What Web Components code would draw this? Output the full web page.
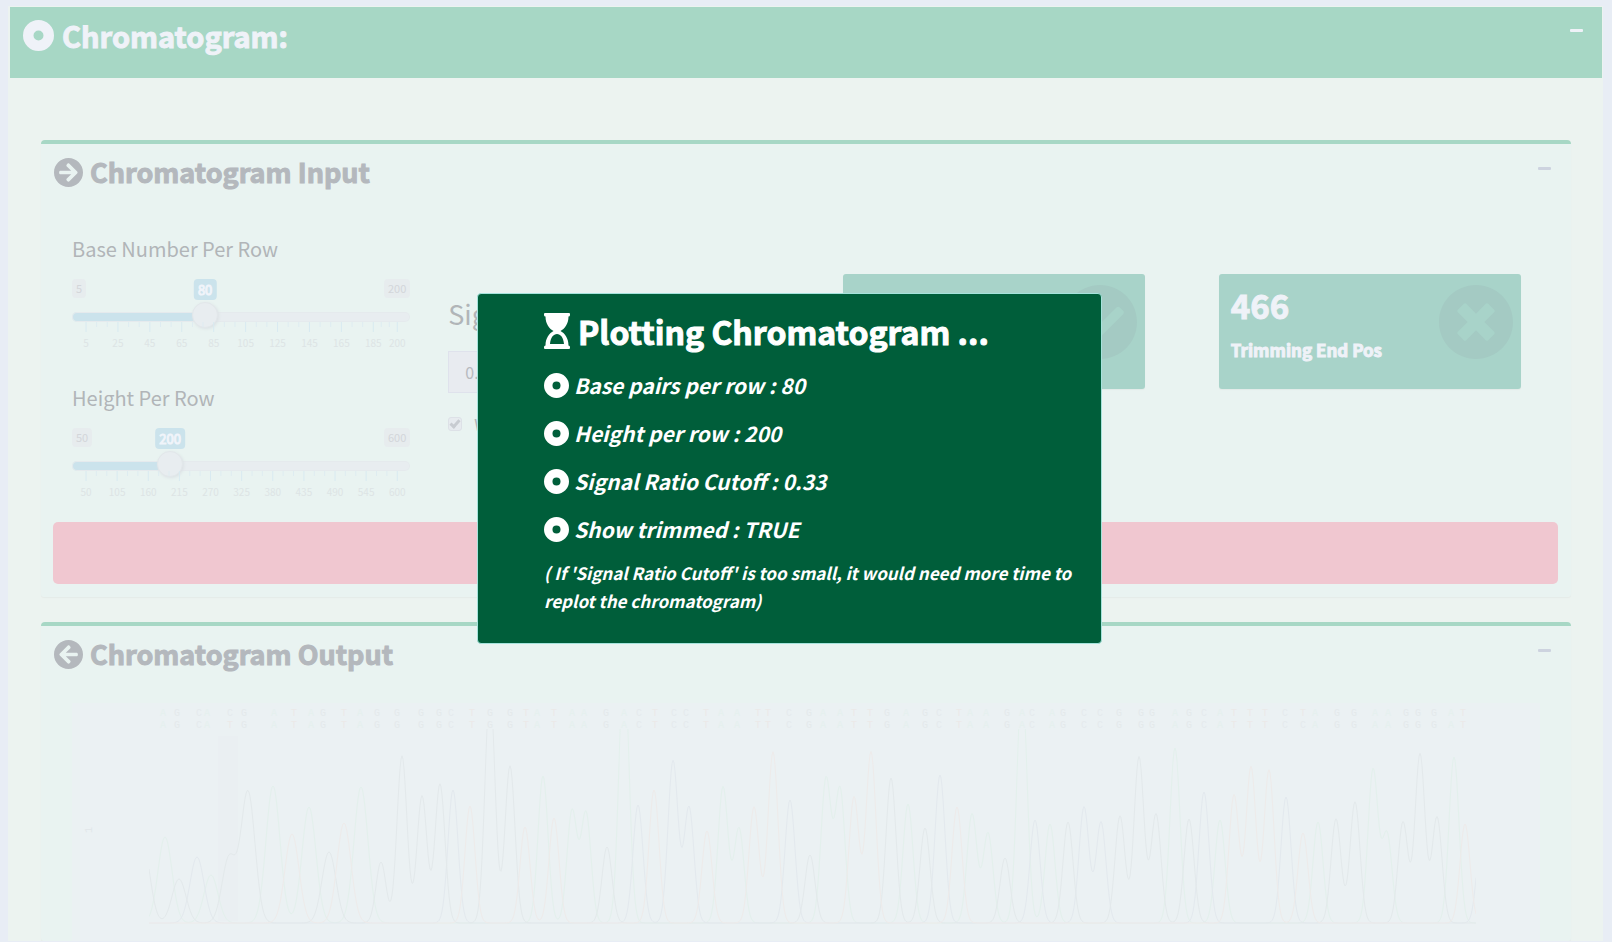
<!DOCTYPE html>
<html lang="en">
<head>
<meta charset="utf-8">
<title>Chromatogram</title>
<style>
  html { background: #e8edf5; }
  body { margin: 0; font-family: "Noto Sans CJK SC", "Open Sans", sans-serif; color: #b1b5b8; }
</style>
</head>
<body>
<chroma-page>
  <chroma-panel heading="Chromatogram Input" icon="right">
    <input-grid>
      <div slot="sliders">
        <range-slider label="Base Number Per Row" min="5" max="200" value="80" step="20"></range-slider>
        <range-slider label="Height Per Row" min="50" max="600" value="200" step="55"></range-slider>
      </div>
      <cutoff-form slot="form"></cutoff-form>
      <value-box slot="start" icon="check"></value-box>
      <value-box slot="end" value="466" caption="Trimming End Pos" icon="times"></value-box>
    </input-grid>
  </chroma-panel>
  <chroma-panel heading="Chromatogram Output" icon="left">
    <chroma-plot></chroma-plot>
  </chroma-panel>
</chroma-page>
<plot-notice>
  <span slot="title">Plotting Chromatogram ...</span>
  <notice-item>Base pairs per row : 80</notice-item>
  <notice-item>Height per row : 200</notice-item>
  <notice-item>Signal Ratio Cutoff : 0.33</notice-item>
  <notice-item>Show trimmed : TRUE</notice-item>
  <span slot="note">( If 'Signal Ratio Cutoff' is too small, it would need more time to replot the chromatogram)</span>
</plot-notice>

<script>
const ICONS = {
  dot: '<path fill-rule="evenodd" d="M256 8a248 248 0 1 0 0 496a248 248 0 1 0 0-496zM256 176a80 80 0 1 1 0 160a80 80 0 1 1 0-160z"/>',
  right: '<path d="M256 8c137 0 248 111 248 248S393 504 256 504 8 393 8 256 119 8 256 8zm-28.900 143.600l75.500 72.400H120c-13.300 0-24 10.700-24 24v16c0 13.300 10.700 24 24 24h182.600l-75.500 72.400c-9.700 9.300-9.900 24.800-.4 34.300l11 10.900c9.400 9.400 24.600 9.400 33.900 0L404.300 273c9.400-9.400 9.400-24.600 0-33.900L271.600 106.300c-9.400-9.400-24.600-9.400-33.900 0l-11 10.900c-9.500 9.600-9.300 25.100.4 34.400z"/>',
  left: '<path transform="matrix(-1 0 0 1 512 0)" d="M256 8c137 0 248 111 248 248S393 504 256 504 8 393 8 256 119 8 256 8zm-28.900 143.600l75.500 72.400H120c-13.300 0-24 10.700-24 24v16c0 13.300 10.700 24 24 24h182.600l-75.500 72.400c-9.700 9.300-9.900 24.800-.4 34.300l11 10.900c9.400 9.400 24.600 9.400 33.900 0L404.300 273c9.400-9.400 9.400-24.600 0-33.900L271.600 106.300c-9.400-9.400-24.600-9.400-33.900 0l-11 10.900c-9.500 9.600-9.300 25.100.4 34.400z"/>',
  check: '<path d="M504 256c0 136.967-111.033 248-248 248S8 392.967 8 256 119.033 8 256 8s248 111.033 248 248zM227.314 387.314l184-184c6.248-6.248 6.248-16.379 0-22.627l-22.627-22.627c-6.248-6.249-16.379-6.249-22.628 0L216 308.118l-70.059-70.059c-6.248-6.248-16.379-6.248-22.628 0l-22.627 22.627c-6.248 6.248-6.248 16.379 0 22.627l104 104c6.249 6.249 16.379 6.249 22.628.001z"/>',
  times: '<path d="M256 8C119 8 8 119 8 256s111 248 248 248 248-111 248-248S393 8 256 8zm121.600 313.100c4.700 4.700 4.700 12.300 0 17L338 377.600c-4.700 4.700-12.300 4.700-17 0L256 312l-65.100 65.600c-4.700 4.700-12.300 4.700-17 0L134.400 338c-4.700-4.700-4.700-12.300 0-17l65.600-65-65.600-65.100c-4.700-4.700-4.700-12.300 0-17l39.600-39.600c4.700-4.700 12.300-4.700 17 0l65 65.700 65.100-65.600c4.700-4.700 12.300-4.700 17 0l39.600 39.600c4.700 4.700 4.700 12.300 0 17L312 256l65.600 65.100z"/>'
};
const icon = name => `<svg class="icon" viewBox="8 8 496 496" aria-hidden="true">${ICONS[name]}</svg>`;

function define(name, render) {
  customElements.define(name, class extends HTMLElement {
    connectedCallback() {
      if (this.shadowRoot) return;
      this.attachShadow({ mode: 'open' }).innerHTML = render(this);
    }
  });
}

define('chroma-page', () => `
<style>
  :host { display: block; padding: 6px 9px 0 8px; }
  main { border: solid #ecf3f0; border-width: 1px 1px 0 2px; background: #ecf3f0; }
  header { display: flex; justify-content: space-between; align-items: flex-start; height: 71px; box-sizing: border-box;
    padding: 10px 19px 0 13px; background: #a7d7c5; color: #eff2f8; }
  h1 { display: flex; align-items: center; gap: 8px; margin: 0; font-size: 29px; line-height: 36px; font-weight: 700; -webkit-text-stroke: 1px currentColor; }
  .icon { width: 31px; height: 31px; fill: currentColor; }
  button { border: 0; padding: 0; width: 13px; height: 27px; background: none; color: inherit; }
  button::before { content: ""; display: block; height: 3px; border-radius: 1px; background: currentColor; }
  .body { display: grid; gap: 25px; padding: 62px 31px 0; }
</style>
<main>
  <header><h1>${icon('dot')}<span>Chromatogram:</span></h1><button aria-label="Collapse"></button></header>
  <div class="body"><slot></slot></div>
</main>`);

define('chroma-panel', el => `
<style>
  :host { display: block; min-width: 0; background: #e9f3f1; border-top: 4px solid #a7d7c5; border-radius: 4px 4px 3px 3px;
    box-shadow: 0 1px 1px #e5ebe8; }
  header { display: flex; justify-content: space-between; align-items: flex-start; padding: 10px 20px 0 13px; }
  h2 { display: flex; align-items: center; gap: 7px; margin: 0; font-size: 27px; line-height: 36px; font-weight: 700; color: #b4b8bd; -webkit-text-stroke: 1px currentColor; }
  .icon { width: 29px; height: 29px; fill: currentColor; }
  button { border: 0; padding: 0; width: 13px; height: 29px; background: none; color: #cdd3df; }
  button::before { content: ""; display: block; height: 3px; border-radius: 1px; background: currentColor; }
</style>
<header><h2>${icon(el.getAttribute('icon'))}<span>${el.getAttribute('heading')}</span></h2><button aria-label="Collapse"></button></header>
<slot></slot>`);

define('input-grid', () => `
<style>
  :host { display: block; padding: 45px 13px 13px 12px; }
  .row { display: grid; grid-template-columns: repeat(4, minmax(0, 1fr)); align-items: start; }
  .col { padding: 0 19px; }
  .form { padding-top: 61px; }
  .box { padding: 39px 37px 0; }
  button { display: block; width: 100%; height: 62px; margin-top: 21px; border: 0; border-radius: 5px; background: #f0c7d0; }
  ::slotted([slot=sliders]) { display: grid; gap: 32px; }
</style>
<div class="row">
  <div class="col"><slot name="sliders"></slot></div>
  <div class="col form"><slot name="form"></slot></div>
  <div class="box"><slot name="start"></slot></div>
  <div class="box"><slot name="end"></slot></div>
</div>
<button aria-label="Save parameters"></button>`);

define('range-slider', el => {
  const [min, max, value, step] = ['min', 'max', 'value', 'step'].map(k => +el.getAttribute(k));
  const at = v => (v - min) / (max - min) * 100;
  const majors = [];
  for (let v = min; v <= max; v += step) majors.push(v);
  if (majors[majors.length - 1] !== max) majors.push(max);
  let scale = '';
  majors.forEach((v, i) => {
    scale += `<line class="major" x1="${at(v)}%" x2="${at(v)}%" y2="10"/><text x="${at(v)}%" y="25">${v}</text>`;
    if (i + 1 < majors.length) for (const f of [1 / 3, 2 / 3]) {
      const x = at(v + (majors[i + 1] - v) * f);
      scale += `<line x1="${x}%" x2="${x}%" y2="5"/>`;
    }
  });
  const p = at(value) / 100;
  return `
<style>
  :host { display: block; --fill: calc(13px + (100% - 26px) * ${p}); }
  label { display: block; font-size: 20px; line-height: 28px; margin-bottom: 16px; }
  .marks { position: relative; display: flex; justify-content: space-between; align-items: flex-start; height: 33px;
    font-size: 11px; line-height: 19px; color: #d3d6da; }
  .marks span { padding: 0 4px; border-radius: 4px; background: #e7ecee; }
  output { position: absolute; left: var(--fill); transform: translateX(-50%); padding: 0 4px; border-radius: 4px;
    font-size: 13px; line-height: 21px; background: #cbe3ec; color: #f0f4fa; -webkit-text-stroke: 1px currentColor; }
  input { display: block; appearance: none; width: 100%; height: 10px; margin: 0; border-radius: 5px; outline-offset: 4px;
    background: linear-gradient(#cbe3ec, #cbe3ec) 0 0 / var(--fill) 100% no-repeat, #e8edf0;
    box-shadow: inset 0 0 0 1px #e5eaed; }
  input::-webkit-slider-runnable-track { height: 10px; }
  input::-webkit-slider-thumb { appearance: none; width: 26px; height: 26px; margin-top: -10px; border-radius: 50%;
    background: #e8edf0; border: 1px solid #e2e7ea; box-shadow: 1px 1px 3px #dce2e5; }
  .scale { padding: 0 13px 0 14px; }
  svg { display: block; width: 100%; height: 30px; overflow: visible; }
  line { stroke: #deecf1; stroke-width: 1; }
  .major { stroke: #d8eaf1; }
  text { font-size: 10px; text-anchor: middle; fill: #dde4e5; }
</style>
<label for="range">${el.getAttribute('label')}</label>
<div class="marks"><span>${min}</span><output for="range">${value}</output><span>${max}</span></div>
<input id="range" type="range" min="${min}" max="${max}" value="${value}">
<div class="scale"><svg>${scale}</svg></div>`;
});

define('cutoff-form', () => `
<style>
  :host { display: block; }
  label { display: block; }
  .title { font-size: 27px; line-height: 36px; margin-bottom: 19px; }
  input[type=text] { display: block; width: 100%; height: 42px; box-sizing: border-box; padding: 0 16px; border: 1px solid #dfe2ec;
    background: #e8ebf0; font: 16px/40px "Noto Sans CJK SC", sans-serif; color: #b7babf; }
  .check { display: flex; align-items: center; gap: 12px; margin-top: 19px; font-size: 16px; line-height: 24px; }
  input[type=checkbox] { appearance: none; display: grid; place-items: center; width: 14px; height: 14px; margin: 0;
    border: 1px solid #dde1e7; border-radius: 3px; background: #e7ebef; }
  input[type=checkbox]:checked::before { content: ""; width: 3px; height: 7px; margin-bottom: 2px; border: solid #c8ccd1; border-width: 0 3px 3px 0; transform: rotate(42deg); }
</style>
<label class="title" for="cutoff">Signal Ratio Cutoff</label>
<input id="cutoff" type="text" value="0.33">
<label class="check"><input type="checkbox" checked>Whether show trimmed region</label>`);

define('value-box', el => `
<style>
  :host { display: block; }
  article { display: flex; justify-content: space-between; height: 115px; box-sizing: border-box; padding: 11px 8px 0 12px;
    border-radius: 3px; background: #a8d3c9; color: #eff2f8; font-weight: 700; box-shadow: 0 1px 1px #e2eae8; -webkit-text-stroke: 1px currentColor; }
  .value { font-size: 33px; line-height: 40px; }
  .caption { font-size: 17px; line-height: 24px; margin-top: 13px; white-space: nowrap; }
  .icon { width: 74px; height: 74px; fill: #a4cac3; flex: none; stroke: none; }
</style>
<article><div><div class="value">${el.getAttribute('value') || ''}</div><div class="caption">${el.getAttribute('caption') || ''}</div></div>${icon(el.getAttribute('icon'))}</article>`);

/* Each base call: letter position, primary call, secondary call. */
const CALLS = `163AA 177GG 199CC 207AA 230CT 244GG 274AA 294TT 311AA 323GG 344TT 360AA 377GG 397GG 421GG 439GG 451CC 472TT 490GG 510GG 526TT 537AA
554TT 572AA 584AA 606GG 624AA 639CC 655TT 674CC 686CC 706TT 721AA 737AA 758TT 768TT 789CC 809GG 823AA 840AA 854TT 870TT 887GG 906AA 925GG 939CC 959TT 970AA 986AA 1007GG 1022AA 1032CC 1052AA 1063GG
1084CC 1100CC 1119GG 1141GG 1152GG 1175AA 1189GG 1204CC 1220AA 1234TT 1250TT 1265TT 1285CC 1303TC 1315AA 1337GG 1354GG 1375AA 1388AA 1406GG 1418GG 1434GG 1451AA 1463TT`.trim().split(/\s+/);
/* Trace peaks: channel, centre and apex in plot coordinates. */
const PEAKS = `G143,845 A165,837 G179,879 C197,857 A211,875 G229,858 G248,792 A273,786 T292,834 A309,807 G329,852 T344,823 A361,787 G381,862 G402,756 G422,796 G440,784 C453,790 T470,806 G490,690 G510,766 T525,827 A543,776
T554,818 A572,811 A586,813 G607,847 A624,660 C638,805 T654,790 C673,761 C689,807 T707,831 A723,787 A739,828 T754,807 T773,752 C790,800 G810,855 A826,779 A840,789 T854,797 T871,752 G891,778 A908,804 G925,828 C940,775 T957,807 A972,814 A988,833 G1005,858 A1022,680 C1035,820 A1050,824 G1068,822
C1084,807 C1101,822 G1120,816 G1139,757 G1156,814 A1175,748 G1189,819 C1204,792 A1220,820 T1234,795 T1251,767 T1269,770 C1286,797 T1303,833 A1318,822 G1336,819 G1355,802 A1373,770 A1387,834 G1403,822 G1420,754 G1437,817 A1454,757 T1465,824 C1482,830`.trim().split(/\s+/);

define('chroma-plot', () => {
  const colors = { A: '#e3f0ec', C: '#e3e9ee', G: '#e3e9eb', T: '#eeebea' };
  const inks = { A: '#e5f0ee', C: '#e5eaed', G: '#e4e9eb', T: '#ece9e8' };
  const base = 923;
  const letters = CALLS.map(c => {
    const [, x, a, b] = c.match(/(\d+)(\w)(\w)/);
    return `<text x="${x}" y="716" fill="${inks[a]}">${a}</text><text x="${x}" y="728" fill="${inks[b]}">${b}</text>`;
  }).join('');
  const traces = Object.keys(colors).map(ch => {
    const peaks = PEAKS.filter(p => p[0] === ch).map(p => p.slice(1).split(',').map(Number));
    let d = '';
    for (let x = 149; x <= 1476; x++) {
      let h = 0;
      for (const [px, py] of peaks) {
        const s = px < 380 ? 7 : 5;
        h += (base - py) * Math.exp(-((x - px) ** 2) / (2 * s * s));
      }
      d += `${d ? 'L' : 'M'}${x} ${(base - h).toFixed(1)}`;
    }
    return `<path d="${d}" stroke="${colors[ch]}"/>`;
  }).join('');
  return `
<style>
  :host { display: block; padding: 31px 31px 0; }
  svg { display: block; width: 100%; background: #ebf1f3; }
  text { font: 10px "Liberation Mono", monospace; text-anchor: middle; }
  path { fill: none; stroke-width: 1; }
</style>
<svg viewBox="72 703 1468 238" role="img" aria-label="Chromatogram traces">
  <clipPath id="area"><rect x="149" y="729" width="1327" height="200"/></clipPath>
  <rect x="218" y="736" width="20" height="185" fill="#eaeff2"/>
  <text x="88" y="834" fill="#e1e6e9" transform="rotate(-90 88 830)">1</text>
  ${letters}
  <g clip-path="url(#area)">${traces}</g>
</svg>`;
});

define('plot-notice', () => `
<style>
  :host { position: fixed; top: calc(31% + 1px); left: calc(50% - 329px); width: 625px; }
  section { box-sizing: border-box; padding: 11px 26px 28px 66px; border: 1px solid #a5e3dc; border-radius: 4px; background: #005e3a; color: #fff; }
  h2 { display: flex; align-items: center; gap: 8px; margin: 0 0 10px; font-size: 32px; line-height: 52px; font-weight: 700; white-space: nowrap; -webkit-text-stroke: 1px currentColor; }
  h2 svg { width: 26px; height: 36px; fill: currentColor; stroke: none; }
  p { margin: 12px 0 0; font-size: 17px; line-height: 28px; font-weight: 700; font-style: italic; }
</style>
<section role="dialog" aria-label="Plotting Chromatogram">
  <h2><svg viewBox="0 0 26 36" aria-hidden="true"><path fill-rule="evenodd" d="M1 0H25Q26 0 26 1V2Q26 3.500 24.500 3.500C24.500 11 20.500 16 16.500 18C20.500 20 24.500 25 24.500 32.500Q26 32.500 26 34V35Q26 36 25 36H1Q0 36 0 35V34Q0 32.500 1.500 32.500C1.500 25 5.500 20 9.500 18C5.500 16 1.500 11 1.500 3.500Q0 3.500 0 2V1Q0 0 1 0ZM6 31H20C19.500 24.500 16.500 21 13 21S6.500 24.500 6 31Z"/></svg><slot name="title"></slot></h2>
  <div><slot></slot></div>
  <p><slot name="note"></slot></p>
</section>`);

define('notice-item', () => `
<style>
  :host { display: flex; align-items: center; gap: 5px; margin-bottom: 12px; font-size: 21px; line-height: 36px; font-weight: 700; font-style: italic; }
  .icon { width: 25px; height: 25px; fill: currentColor; }
</style>
${icon('dot')}<span><slot></slot></span>`);
</script>
</body>
</html>
